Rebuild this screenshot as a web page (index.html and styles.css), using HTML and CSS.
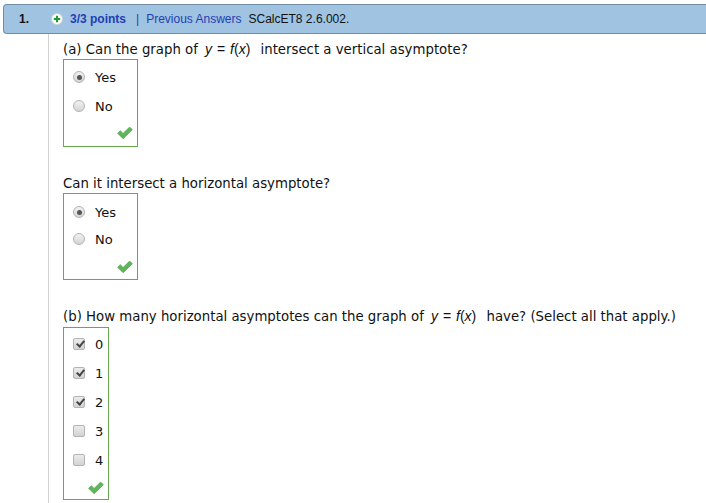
FILE: index.html
```html
<!DOCTYPE html>
<html>
<head>
<meta charset="utf-8">
<link rel="stylesheet" href="styles.css">
</head>
<body>
<div class="header">
  <span class="num">1.</span>
  <span class="plus"><svg width="12" height="12" viewBox="0 0 12 12"><circle cx="6" cy="6" r="5.5" fill="#fff" stroke="#c8d2da" stroke-width="1"/><path d="M5 2.8h2v2.2h2.2v2H7v2.2H5V7H2.8V5H5z" fill="#1f9a2e"/></svg></span>
  <span class="pts">3/3 points</span>
  <span class="sep">|</span>
  <span class="prev">Previous Answers</span>
  <span class="src">SCalcET8 2.6.002.</span>
</div>
<div class="content">
  <p class="q first">(a) Can the graph of <span class="math"><i>y</i> = <i>f</i>(<i>x</i>)</span> intersect a vertical asymptote?</p>
  <div class="ans">
    <div class="row"><span class="radio on"></span>Yes</div>
    <div class="row"><span class="radio"></span>No</div>
    <div class="ok"><svg width="16" height="12" viewBox="0 0 16 12"><path d="M0.6 6.3 L3.3 3.7 L6.1 6.4 L12.6 0 L15.4 2.7 L6.1 11.8 Z" fill="#5db65a" stroke="#4a9b47" stroke-width="0.6"/></svg></div>
  </div>
  <p class="q">Can it intersect a horizontal asymptote?</p>
  <div class="ans tight">
    <div class="row"><span class="radio on"></span>Yes</div>
    <div class="row"><span class="radio"></span>No</div>
    <div class="ok"><svg width="16" height="12" viewBox="0 0 16 12"><path d="M0.6 6.3 L3.3 3.7 L6.1 6.4 L12.6 0 L15.4 2.7 L6.1 11.8 Z" fill="#5db65a" stroke="#4a9b47" stroke-width="0.6"/></svg></div>
  </div>
  <p class="q last">(b) How many horizontal asymptotes can the graph of <span class="math"><i>y</i> = <i>f</i>(<i>x</i>)</span> have? (Select all that apply.)</p>
  <div class="ans multi">
    <div class="row"><span class="cb on"></span>0</div>
    <div class="row"><span class="cb on"></span>1</div>
    <div class="row"><span class="cb on"></span>2</div>
    <div class="row"><span class="cb"></span>3</div>
    <div class="row"><span class="cb"></span>4</div>
    <div class="ok"><svg width="16" height="12" viewBox="0 0 16 12"><path d="M0.6 6.3 L3.3 3.7 L6.1 6.4 L12.6 0 L15.4 2.7 L6.1 11.8 Z" fill="#5db65a" stroke="#4a9b47" stroke-width="0.6"/></svg></div>
  </div>
</div>
</body>
</html>
```
FILE: styles.css
```css
html, body {
  margin: 0;
  padding: 0;
  background: #fff;
}
body {
  width: 706px;
  height: 503px;
  overflow: hidden;
  font-family: "DejaVu Sans", Verdana, sans-serif;
  color: #111;
}
.header {
  box-sizing: border-box;
  margin: 4px 0 0 3px;
  height: 30px;
  background: #9fc3e1;
  border: 1px solid #6f8ea6;
  border-right: none;
  border-radius: 4px 0 0 4px;
  display: flex;
  align-items: center;
  font-family: "Liberation Sans", Arial, sans-serif;
  font-size: 12px;
  padding-left: 15px;
  white-space: nowrap;
}
.num {
  font-weight: bold;
  color: #111;
  width: 32px;
}
.plus {
  display: flex;
  width: 12px;
  height: 12px;
  margin-right: 7px;
}
.pts {
  font-weight: bold;
  color: #1f3fb3;
  margin-right: 10px;
}
.sep {
  color: #1f3fb3;
  margin-right: 7px;
}
.prev {
  color: #1f3fb3;
  margin-right: 7px;
}
.src {
  color: #111;
}
.content {
  margin-left: 48px;
  border-left: 1px solid #d2d2d2;
  padding-left: 14px;
  padding-top: 7px;
  height: 470px;
}
.q {
  margin: 29px 0 1px;
  font-size: 13.3px;
  line-height: 16px;
  white-space: nowrap;
}
.q.first {
  margin-top: 0;
}
.q.last {
  margin-top: 28px;
}
.math {
  margin: 0 6px 0 3px;
  font-family: "Liberation Sans", Arial, sans-serif;
  font-size: 14px;
  word-spacing: 1px;
}
.math i {
  font-style: italic;
}
.ans {
  box-sizing: border-box;
  width: 75px;
  border: 1px solid #6aa84f;
  padding: 7px 4px 7px 9px;
  font-size: 13px;
}
.ans.tight {
  padding-top: 8px;
  padding-bottom: 6px;
}
.ans.tight .row + .row {
  margin-top: 7px;
}
.ans.tight .ok {
  margin-top: 12px;
}
.ans.multi {
  width: 46px;
  padding-top: 6px;
  padding-bottom: 5px;
  margin-top: 2px;
}
.ans.multi .ok {
  margin-top: 12px;
}
.row {
  display: flex;
  align-items: center;
  height: 20px;
}
.row + .row {
  margin-top: 9px;
}
.radio {
  box-sizing: border-box;
  width: 12px;
  height: 12px;
  border-radius: 50%;
  border: 1px solid #b3b3b3;
  background: linear-gradient(#f2f2f2, #d4d4d4);
  margin-right: 10px;
  display: flex;
  align-items: center;
  justify-content: center;
}
.radio.on::after {
  content: "";
  width: 5px;
  height: 5px;
  border-radius: 50%;
  background: #555;
}
.cb {
  box-sizing: border-box;
  width: 12px;
  height: 12px;
  border-radius: 2px;
  border: 1px solid #b3b3b3;
  background: linear-gradient(#ececec, #d2d2d2);
  margin-right: 10px;
  position: relative;
}
.cb.on::after {
  content: "";
  position: absolute;
  top: 0px;
  left: 3.5px;
  width: 3px;
  height: 6px;
  border: solid #444;
  border-width: 0 2px 2px 0;
  transform: rotate(40deg);
}
.ok {
  display: flex;
  justify-content: flex-end;
  margin-top: 11px;
  height: 12px;
}
.ok svg {
  display: block;
}
```
